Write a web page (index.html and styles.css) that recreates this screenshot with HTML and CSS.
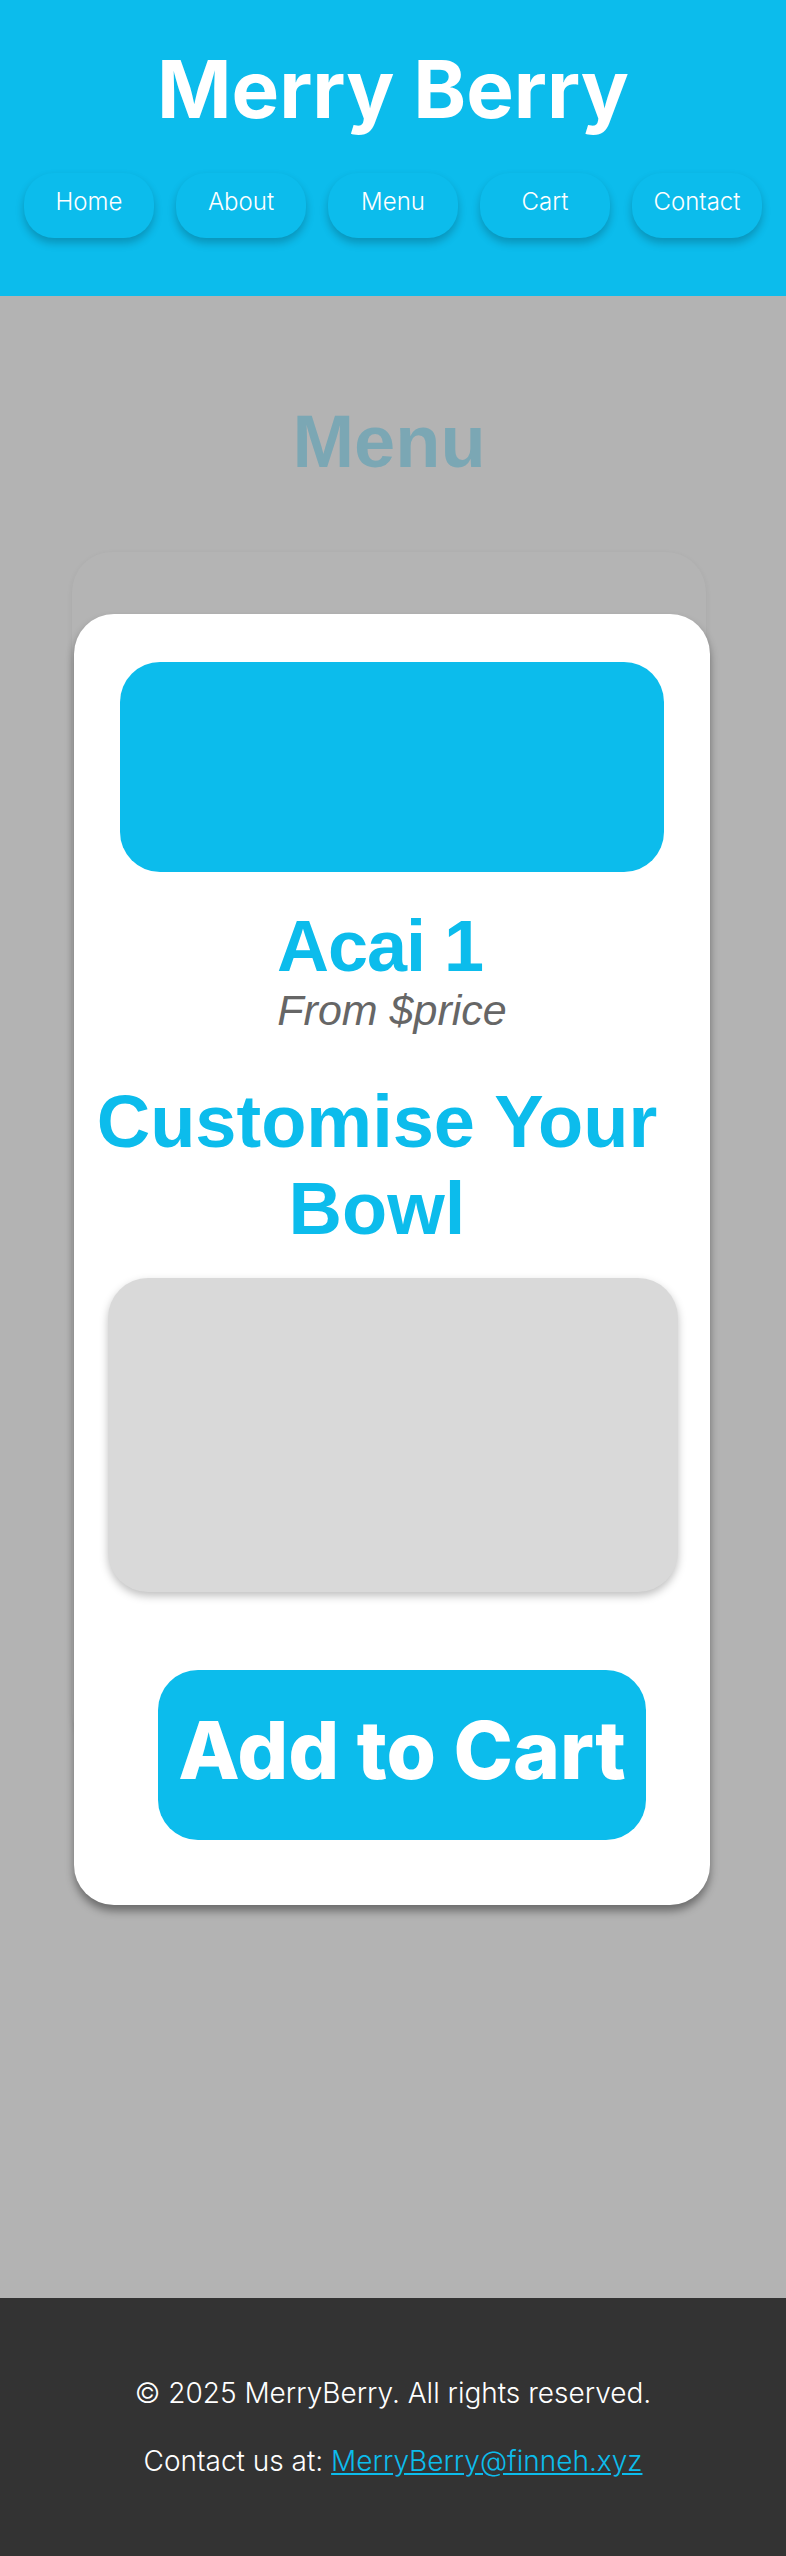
FILE: index.html
```html
<!DOCTYPE html>
<html lang="en">
<head>
<meta charset="utf-8">
<title>Merry Berry - Menu</title>
<link rel="stylesheet" href="styles.css">
</head>
<body>
<header class="site-header">
  <h1 class="brand">Merry Berry</h1>
  <nav class="nav">
    <a class="nav-btn" href="#">Home</a>
    <a class="nav-btn" href="#">About</a>
    <a class="nav-btn" href="#">Menu</a>
    <a class="nav-btn" href="#">Cart</a>
    <a class="nav-btn" href="#">Contact</a>
  </nav>
</header>

<main class="main">
  <h2 class="page-title">Menu</h2>
  <div class="menu-card-ghost"></div>

  <div class="modal">
    <div class="modal-image"></div>
    <div class="modal-text">
      <h3 class="item-name">Acai 1</h3>
      <p class="item-price">From $price</p>
      <h2 class="customise">Customise Your Bowl</h2>
    </div>
    <div class="options-box"></div>
    <button class="add-btn" type="button">Add to Cart</button>
  </div>
</main>

<footer class="site-footer">
  <p class="foot-line">© 2025 MerryBerry. All rights reserved.</p>
  <p class="foot-line">Contact us at: <a class="foot-link" href="#">MerryBerry@finneh.xyz</a></p>
</footer>
</body>
</html>
```

FILE: styles.css
```css
* { box-sizing: border-box; }

body {
  margin: 0;
  font-family: Inter, "Noto Sans", sans-serif;
  background: #b3b3b3;
}

.site-header {
  background: #0cbcec;
  height: 296px;
  padding-top: 40px;
  text-align: center;
}

.brand {
  margin: 0;
  font-family: Inter, sans-serif;
  font-weight: 700;
  font-size: 80px;
  line-height: normal;
  color: #fff;
}

.nav {
  display: flex;
  justify-content: center;
  gap: 22px;
  margin-top: 36px;
}

.nav-btn {
  width: 130px;
  height: 65px;
  padding-top: 14px;
  border-radius: 30px;
  background: #0cbcec;
  color: #fff;
  text-decoration: none;
  font-size: 24px;
  font-weight: 300;
  line-height: normal;
  box-shadow: 0 5px 9px rgba(0, 0, 0, 0.22);
}

.main {
  position: relative;
  height: 2002px;
  padding-top: 103px;
}

.page-title {
  margin: 0;
  padding-right: 8px;
  text-align: center;
  font-family: "Liberation Sans", Arial, sans-serif;
  font-weight: 700;
  font-size: 74px;
  line-height: normal;
  color: #7ba7b4;
}

.menu-card-ghost {
  width: 634px;
  height: 1200px;
  margin: 68px 0 0 72px;
  border-radius: 40px;
  background: #b4b4b4;
  box-shadow: 0 2px 6px rgba(0, 0, 0, 0.06);
}

.modal {
  position: absolute;
  top: 318px;
  left: 74px;
  width: 636px;
  padding: 33px 33px 65px 33px;
  background: #fff;
  border-radius: 40px;
  box-shadow: 0 6px 8px rgba(0, 0, 0, 0.4);
}

.modal-image {
  width: 544px;
  height: 210px;
  margin: 15px auto 0;
  border-radius: 40px;
  background: #0cbcec;
}

.modal-text {
  margin: 0 14px 0 -16px;
  text-align: center;
}

.item-name {
  margin: 31px 0 0;
  padding-left: 6px;
  font-family: "Liberation Sans", Arial, sans-serif;
  font-weight: 700;
  font-size: 72px;
  line-height: 1.2;
  letter-spacing: -1px;
  color: #0cbcec;
}

.item-price {
  margin: 0 -30px 0 0;
  font-family: "Liberation Sans", Arial, sans-serif;
  font-style: italic;
  font-size: 43px;
  line-height: 42px;
  color: #666;
}

.customise {
  margin: 47px 0 0;
  font-family: "Liberation Sans", Arial, sans-serif;
  font-weight: 700;
  font-size: 74px;
  line-height: 87px;
  color: #0cbcec;
}

.options-box {
  width: 570px;
  height: 314px;
  margin: 26px 0 0 1px;
  border-radius: 40px;
  background: #d9d9d9;
  box-shadow: 0 4px 8px rgba(0, 0, 0, 0.25);
}

.add-btn {
  display: flex;
  align-items: center;
  justify-content: center;
  width: 488px;
  height: 170px;
  margin: 78px 0 0 51px;
  padding: 0 0 12px;
  border: none;
  border-radius: 40px;
  background: #0cbcec;
  color: #fff;
  font-family: Inter, sans-serif;
  font-weight: 800;
  font-size: 80px;
  line-height: normal;
  white-space: nowrap;
}

.site-footer {
  background: #333;
  height: 258px;
  padding-top: 78px;
  text-align: center;
  color: #fff;
}

.foot-line {
  margin: 0;
  font-size: 28px;
  font-weight: 300;
  line-height: normal;
}

.foot-line + .foot-line {
  margin-top: 34px;
}

.foot-link {
  color: #0cbcec;
}
```
